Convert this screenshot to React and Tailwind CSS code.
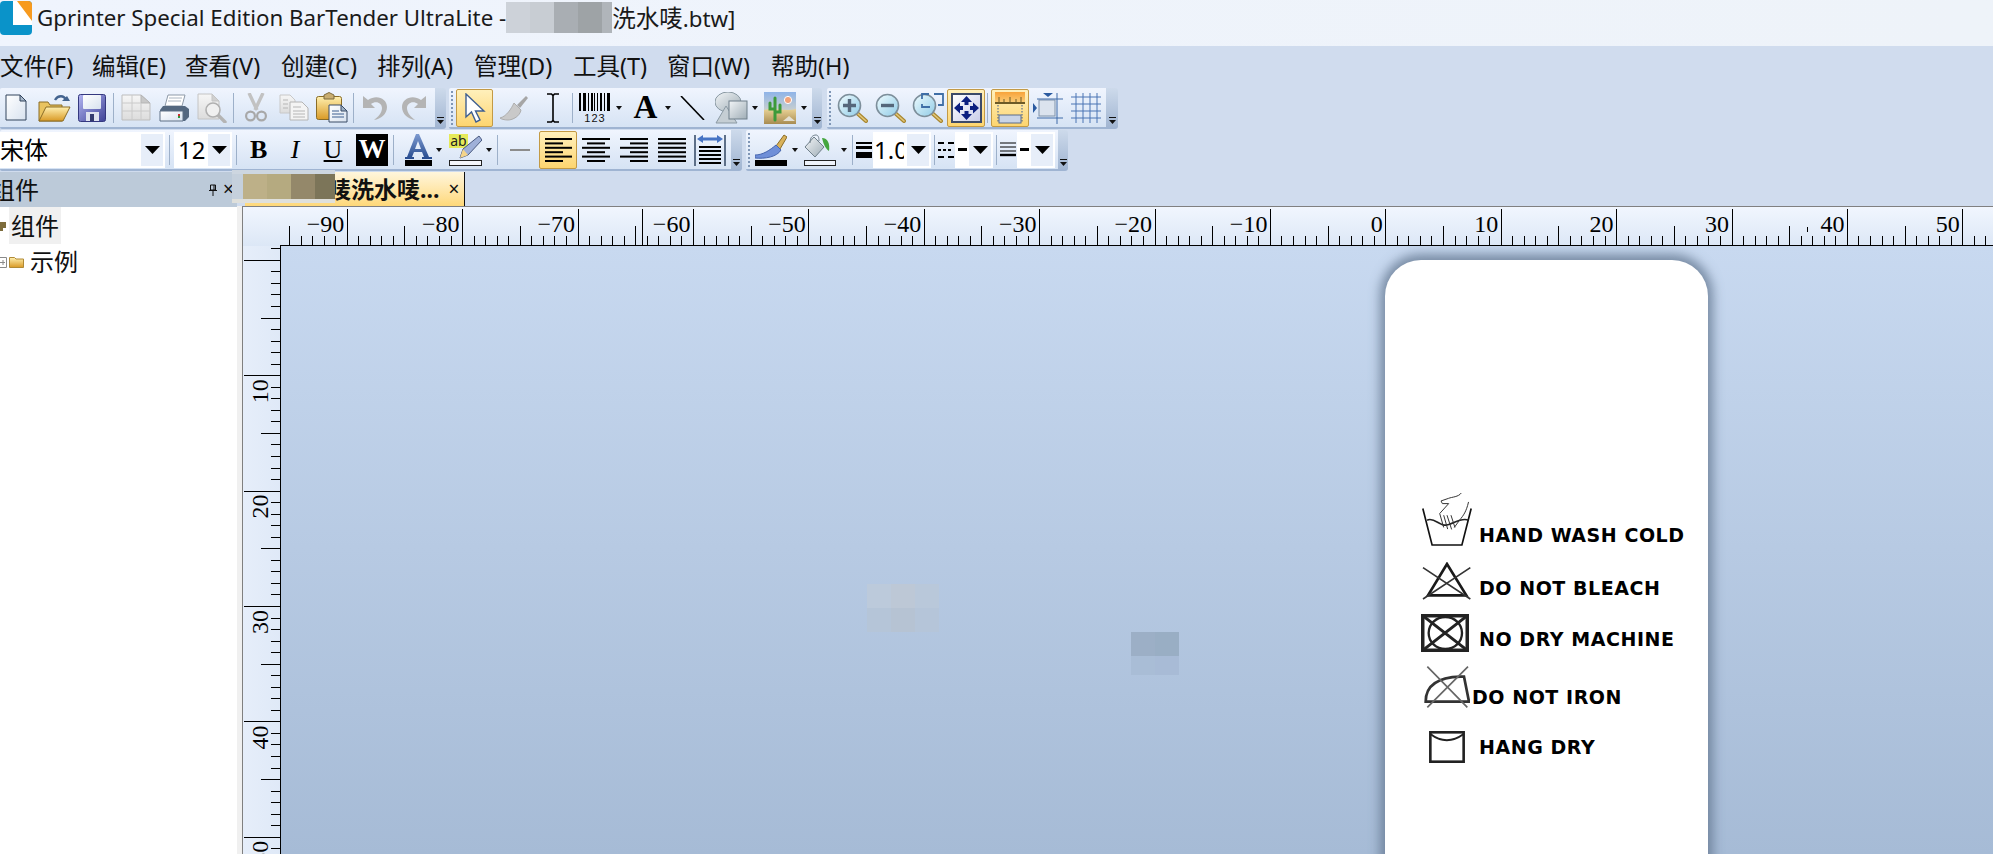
const menus = [
  { label: '文件(F)', width: 'w-[92px]' },
  { label: '编辑(E)', width: 'w-[93px]' },
  { label: '查看(V)', width: 'w-[96px]' },
  { label: '创建(C)', width: 'w-[96px]' },
  { label: '排列(A)', width: 'w-[97px]' },
  { label: '管理(D)', width: 'w-[99px]' },
  { label: '工具(T)', width: 'w-[94px]' },
  { label: '窗口(W)', width: 'w-[104px]' },
  { label: '帮助(H)', width: 'w-[90px]' },
]

const UNIT = 11.54
const X_ZERO = 1385.3
const Y_ZERO = 259.8

function range(from, to) {
  const out = []
  for (let i = from; i <= to; i++) out.push(i)
  return out
}

function Defs() {
  return (
    <svg className="absolute h-0 w-0">
      <defs>
        <linearGradient id="folder" x1="0" y1="0" x2="0" y2="1"><stop offset="0" stopColor="#fff0b0" /><stop offset="1" stopColor="#d99a26" /></linearGradient>
        <linearGradient id="paper" x1="0" y1="0" x2="1" y2="1"><stop offset="0" stopColor="#ffffff" /><stop offset="1" stopColor="#d8e2ef" /></linearGradient>
        <linearGradient id="grey" x1="0" y1="0" x2="0" y2="1"><stop offset="0" stopColor="#f6f6f6" /><stop offset="1" stopColor="#dcdcdc" /></linearGradient>
        <linearGradient id="disk" x1="0" y1="0" x2="1" y2="1"><stop offset="0" stopColor="#b4b6f2" /><stop offset="1" stopColor="#3d4196" /></linearGradient>
        <linearGradient id="lens" x1="0" y1="0" x2="1" y2="1"><stop offset="0" stopColor="#f0fcff" /><stop offset="1" stopColor="#8fcbe6" /></linearGradient>
        <linearGradient id="inkA" x1="0" y1="0" x2="0" y2="1"><stop offset="0" stopColor="#7d9ad0" /><stop offset="1" stopColor="#254a8e" /></linearGradient>
        <linearGradient id="sand" x1="0" y1="0" x2="0" y2="1"><stop offset="0" stopColor="#e9d295" /><stop offset="1" stopColor="#a88c52" /></linearGradient>
        <linearGradient id="sky" x1="0" y1="0" x2="0" y2="1"><stop offset="0" stopColor="#8fb4e8" /><stop offset="1" stopColor="#f3e4bc" /></linearGradient>
        <linearGradient id="rule" x1="0" y1="0" x2="0" y2="1"><stop offset="0" stopColor="#f7a33a" /><stop offset="1" stopColor="#fcd27e" /></linearGradient>
        <linearGradient id="shape" x1="0" y1="0" x2="1" y2="1"><stop offset="0" stopColor="#f2f5f7" /><stop offset="1" stopColor="#9fadb6" /></linearGradient>
        <linearGradient id="fit" x1="0" y1="0" x2="1" y2="1"><stop offset="0" stopColor="#ffffff" /><stop offset="1" stopColor="#c9cdea" /></linearGradient>
      </defs>
    </svg>
  )
}

function Toolbar({ body, chevron, children }) {
  return (
    <div className="flex h-[41px] shrink-0">
      <div className={`flex items-center rounded-l-[2px] border-b-2 border-[#9fb4d2] bg-linear-to-b from-[#f0f5fe] to-[#d6e3f4] ${body}`}>
        {children}
      </div>
      <div className={`flex flex-col items-center justify-end rounded-r-[3px] border-b-2 border-[#9fb4d2] bg-linear-to-b from-[#cddaeb] to-[#a2b6d2] pb-[3px] ${chevron}`}>
        <svg className="h-[7px] w-[7px]" viewBox="0 0 7 7">
          <path d="M0 0.5H7" stroke="#111" />
          <path d="M0 3H7L3.5 7Z" fill="#111" />
        </svg>
      </div>
    </div>
  )
}

function Sep({ className }) {
  return <div className={`h-[30px] w-px shrink-0 bg-[#9db0c9] ${className}`} />
}

function Grip({ className }) {
  return <div className={`h-[34px] w-[2px] shrink-0 border-l-2 border-dotted border-[#7f96b6] ${className}`} />
}

function Tiny({ className }) {
  return (
    <svg className={`h-[4px] w-[6px] shrink-0 ${className}`} viewBox="0 0 6 4">
      <path d="M0 0H6L3 4Z" fill="#111" />
    </svg>
  )
}

function Hot({ className, children }) {
  return (
    <div className={`flex h-[38px] shrink-0 items-center justify-center rounded-[2px] border border-[#c39a45] bg-linear-to-b from-[#fff0bb] to-[#fdd56f] ${className}`}>
      {children}
    </div>
  )
}

function Combo({ width, arrow, children }) {
  return (
    <div className={`flex h-[36px] shrink-0 border-2 border-l-0 border-white bg-white ${width}`}>
      <div className="flex flex-1 items-center overflow-hidden text-[24px] leading-none text-black">{children}</div>
      <div className={`flex items-center justify-center bg-[#e7eef9] ${arrow}`}>
        <svg className="h-[8px] w-[15px]" viewBox="0 0 15 8">
          <path d="M0 0H15L7.5 8Z" fill="#000" />
        </svg>
      </div>
    </div>
  )
}

function AlignIcon({ className, lines }) {
  return (
    <svg className={`h-[24px] w-[28px] shrink-0 ${className}`} viewBox="0 0 28 24">
      {lines.map((l, i) => (
        <rect key={i} x={l[0]} y={i * 4.4} width={l[1]} height="2" fill="#000" />
      ))}
    </svg>
  )
}

function Magnifier({ children }) {
  return (
    <>
      <path d="M20 20L29 28" stroke="#a8862f" strokeWidth="4" strokeLinecap="round" />
      <path d="M20 20L29 28" stroke="#e2c77a" strokeWidth="1.6" strokeLinecap="round" />
      <circle cx="12.5" cy="12.5" r="11" fill="url(#lens)" stroke="#7d8f9b" strokeWidth="1.6" />
      {children}
    </>
  )
}

function TopToolbars() {
  return (
    <div className="flex gap-[3px]">
      <Toolbar body="w-[435px]" chevron="w-[11px]">
        <svg className="ml-[5px] h-[27px] w-[22px] shrink-0" viewBox="0 0 22 27">
          <path d="M1 1H15L21 7V26H1Z" fill="url(#paper)" stroke="#33445c" />
          <path d="M15 1V7H21Z" fill="#a9b9cc" stroke="#33445c" />
        </svg>
        <svg className="ml-[11px] h-[28px] w-[33px] shrink-0" viewBox="0 0 33 28">
          <path d="M1 27V8H10L12 11H24V27Z" fill="#e9c35f" stroke="#8a6c26" />
          <path d="M1 27L8 13H32L25 27Z" fill="url(#folder)" stroke="#8a6c26" />
          <path d="M17 6C20 1 26 1 28 6" fill="none" stroke="#44648f" strokeWidth="2.4" />
          <path d="M24 7H32L29 2Z" fill="#44648f" />
        </svg>
        <svg className="ml-[7px] h-[28px] w-[28px] shrink-0" viewBox="0 0 28 28">
          <rect x="0.5" y="0.5" width="27" height="27" rx="2" fill="url(#disk)" stroke="#34387f" />
          <rect x="5" y="1" width="18" height="14" rx="1" fill="url(#paper)" />
          <rect x="8" y="18" width="13" height="9" fill="#dfe2ef" />
          <rect x="12" y="20" width="4" height="7" fill="#343a6e" />
        </svg>
        <Sep className="ml-[7px]" />
        <svg className="ml-[7px] h-[27px] w-[30px] shrink-0" viewBox="0 0 30 27">
          <path d="M1 1H20L29 9V26H1Z" fill="url(#grey)" stroke="#bdbdbd" />
          <path d="M20 1V9H29Z" fill="#c8c8c8" stroke="#b5b5b5" />
          <path d="M1 9H20M1 17H29M11 1V26M20 9V26" stroke="#cacaca" fill="none" />
        </svg>
        <svg className="ml-[8px] h-[28px] w-[30px] shrink-0" viewBox="0 0 30 28">
          <path d="M9 1H26L23 12H6Z" fill="#fff" stroke="#8d99a7" />
          <path d="M10 4H23M9 7H22" stroke="#aab4c0" />
          <path d="M4 12H26L30 15V23L26 27H1V16Z" fill="#53677f" />
          <path d="M1 17H24V27H1Z" fill="url(#paper)" stroke="#5f7186" />
          <rect x="19" y="20" width="2" height="2" fill="#cc3030" />
          <rect x="19" y="22" width="2" height="2" fill="#2f9a3c" />
        </svg>
        <svg className="ml-[8px] h-[30px] w-[30px] shrink-0" viewBox="0 0 30 30">
          <path d="M1 1H15L22 8V26H1Z" fill="url(#grey)" stroke="#c4c4c4" />
          <path d="M15 1V8H22Z" fill="#d0d0d0" stroke="#c4c4c4" />
          <path d="M21 22L28 29" stroke="#b4b4b4" strokeWidth="3.4" strokeLinecap="round" />
          <circle cx="16" cy="17" r="7" fill="#f0f0f0" stroke="#b0b0b0" strokeWidth="1.6" />
        </svg>
        <Sep className="ml-[6px]" />
        <svg className="ml-[11px] h-[29px] w-[22px] shrink-0" viewBox="0 0 22 29">
          <path d="M4 0L12 17M18 0L10 17" stroke="#c2c2c2" strokeWidth="3.4" />
          <circle cx="5.5" cy="23" r="4.4" fill="none" stroke="#a8a8a8" strokeWidth="2.2" />
          <circle cx="16.5" cy="23" r="4.4" fill="none" stroke="#a8a8a8" strokeWidth="2.2" />
        </svg>
        <svg className="ml-[12px] h-[27px] w-[30px] shrink-0" viewBox="0 0 30 27">
          <path d="M1 1H11L16 6V19H1Z" fill="url(#grey)" stroke="#c8c8c8" />
          <path d="M11 8H23L29 14V26H11Z" fill="#f4f4f4" stroke="#b4b4b4" />
          <path d="M4 6H9M4 10H9M4 14H9M14 13H22M14 17H26M14 20H26M14 23H26" stroke="#b6b6b6" />
        </svg>
        <svg className="ml-[7px] h-[31px] w-[32px] shrink-0" viewBox="0 0 32 31">
          <rect x="0.5" y="4.5" width="25" height="23" rx="2" fill="url(#folder)" stroke="#8a6c26" />
          <path d="M8 7V3L13 0.5L18 3V7Z" fill="#c9ad70" stroke="#7d6a3c" />
          <path d="M13 13H25L31 19V30H13Z" fill="url(#paper)" stroke="#3b4d66" />
          <path d="M25 13V19H31Z" fill="#9cb0c7" stroke="#3b4d66" />
          <path d="M16 19H23M16 22H28M16 25H28" stroke="#3d5f8f" />
        </svg>
        <Sep className="ml-[5px]" />
        <svg className="ml-[9px] h-[27px] w-[24px] shrink-0" viewBox="0 0 24 27">
          <path d="M0 2V14H12L8 10C13 6 19 9 19 14C19 19 15 23 11 26C18 25 24 20 24 13C24 4 13 0 5 6Z" fill="#b4b4b4" />
        </svg>
        <svg className="ml-[15px] h-[27px] w-[24px] -scale-x-100 shrink-0" viewBox="0 0 24 27">
          <path d="M0 2V14H12L8 10C13 6 19 9 19 14C19 19 15 23 11 26C18 25 24 20 24 13C24 4 13 0 5 6Z" fill="#b4b4b4" />
        </svg>
      </Toolbar>
      <Toolbar body="w-[363px]" chevron="w-[10px]">
        <Grip className="ml-[2px]" />
        <Hot className="ml-[3px] w-[37px]">
          <svg className="h-[30px] w-[22px]" viewBox="0 0 22 30">
            <path d="M2 1V24L7.5 19L12 29L16 27L11.5 18H20Z" fill="#fff" stroke="#3f5f90" strokeWidth="1.4" />
          </svg>
        </Hot>
        <svg className="ml-[7px] h-[26px] w-[28px] shrink-0" viewBox="0 0 28 26">
          <path d="M17 10L26 1L28 3L20 13Z" fill="#a6a6a6" />
          <path d="M14 8L21 15C20 21 13 25 8 25C4 25 1 24 0 23C7 21 11 14 14 8Z" fill="#c9c9c9" stroke="#adadad" />
        </svg>
        <svg className="ml-[18px] h-[30px] w-[14px] shrink-0" viewBox="0 0 14 30">
          <path d="M1 1H5.5L7 2.5L8.5 1H13M1 29H5.5L7 27.5L8.5 29H13M7 2.5V27.5" fill="none" stroke="#000" strokeWidth="1.6" />
        </svg>
        <Sep className="ml-[12px]" />
        <svg className="ml-[6px] h-[30px] w-[32px] shrink-0" viewBox="0 0 32 30">
          {[[0, 2], [4, 3], [9, 1], [12, 2], [15, 1], [18, 1], [21, 2], [25, 1], [28, 3]].map(b => (
            <rect key={b[0]} x={b[0]} y="0" width={b[1]} height="18" fill="#000" />
          ))}
          <text x="16" y="29" textAnchor="middle" letterSpacing="1" fontSize="11" fontFamily="Liberation Sans, sans-serif" fill="#111">123</text>
        </svg>
        <Tiny className="ml-[5px]" />
        <span className="ml-[11px] w-[25px] shrink-0 text-center font-['Liberation_Serif',serif] text-[33px] leading-none font-bold text-black">A</span>
        <Tiny className="ml-[7px]" />
        <svg className="ml-[9px] h-[24px] w-[25px] shrink-0" viewBox="0 0 25 24">
          <path d="M1 0L24 24" stroke="#000" strokeWidth="1.6" />
        </svg>
        <svg className="ml-[10px] h-[32px] w-[33px] shrink-0" viewBox="0 0 33 32">
          <ellipse cx="13" cy="10" rx="13" ry="10" fill="url(#shape)" stroke="#8b9aa4" />
          <path d="M11 14L22 31H1Z" fill="#c5ced4" stroke="#8b9aa4" />
          <rect x="14" y="9" width="18" height="18" fill="url(#shape)" stroke="#6f7f8a" />
        </svg>
        <Tiny className="ml-[4px]" />
        <svg className="ml-[6px] h-[32px] w-[32px] shrink-0" viewBox="0 0 32 32">
          <rect width="32" height="32" fill="url(#sky)" />
          <path d="M0 18C10 15 22 20 32 17V32H0Z" fill="url(#sand)" />
          <circle cx="24" cy="8" r="3.6" fill="#f2a27a" stroke="#fff" />
          <path d="M11 28V6M11 17H6V11M11 20H16V13" fill="none" stroke="#3c9a3a" strokeWidth="3" strokeLinecap="round" />
          <path d="M19 29L25 24L31 29Z" fill="#e4e0d2" />
        </svg>
        <Tiny className="ml-[5px]" />
      </Toolbar>
      <div className="ml-[2px]">
        <Toolbar body="w-[279px]" chevron="w-[12px]">
          <Grip className="ml-[2px]" />
          <svg className="ml-[6px] h-[30px] w-[31px] shrink-0" viewBox="0 0 31 30">
            <Magnifier>
              <path d="M12.5 6V19M6 12.5H19" stroke="#55677a" strokeWidth="3.4" />
            </Magnifier>
          </svg>
          <svg className="ml-[7px] h-[30px] w-[31px] shrink-0" viewBox="0 0 31 30">
            <Magnifier>
              <path d="M6 12.5H19" stroke="#55677a" strokeWidth="3.4" />
            </Magnifier>
          </svg>
          <svg className="ml-[6px] h-[30px] w-[32px] shrink-0" viewBox="0 0 32 30">
            <Magnifier>
              <path d="M10 6V1H17M22 1H31V12H26M10 11V14H18" fill="none" stroke="#3f6ea6" strokeWidth="1.8" />
            </Magnifier>
          </svg>
          <Hot className="ml-[3px] w-[38px]">
            <svg className="h-[30px] w-[31px]" viewBox="0 0 31 30">
              <rect x="1" y="1" width="29" height="28" fill="url(#fit)" stroke="#3c4a68" strokeWidth="2" />
              <path d="M15.5 3L21 9H17.5V12H13.5V9H10ZM15.5 27L21 21H17.5V18H13.5V21H10ZM3 15L9 9.5V13H12V17H9V20.5ZM28 15L22 9.5V13H19V17H22V20.5Z" fill="#0c1f80" />
            </svg>
          </Hot>
          <Sep className="ml-[2px]" />
          <Hot className="ml-[3px] w-[38px]">
            <svg className="h-[32px] w-[32px]" viewBox="0 0 32 32">
              <rect x="1" y="0" width="30" height="12" fill="url(#rule)" />
              <rect x="1" y="10" width="30" height="2" fill="#6d5a26" />
              <path d="M5 5V10M10 7V10M16 5V10M22 7V10M27 5V10" stroke="#6d5a26" />
              <path d="M4 13V31M28 13V31" stroke="#3d5a8f" strokeDasharray="1.5 1.5" />
              <rect x="5" y="23" width="22" height="8" fill="#c9d4e6" stroke="#5a6d8a" />
            </svg>
          </Hot>
          <svg className="ml-[4px] h-[32px] w-[30px] shrink-0" viewBox="0 0 30 32">
            <rect x="6" y="8" width="16" height="16" fill="#dbe3ee" stroke="#7f92aa" />
            <path d="M4 7H30M4 26H30M24 1V32" stroke="#3f6aa8" fill="none" />
            <path d="M10 1H20L15 5ZM0 11V21L4 16Z" fill="#2a5aa0" />
          </svg>
          <svg className="ml-[8px] h-[30px] w-[30px] shrink-0" viewBox="0 0 30 30">
            <path d="M0 4H30M0 11H30M0 18H30M0 25H30M5 0V30M12 0V30M19 0V30M26 0V30" stroke="#4a74b4" fill="none" />
          </svg>
        </Toolbar>
      </div>
    </div>
  )
}

function FormatToolbars() {
  return (
    <div className="mt-[1px] flex">
      <Toolbar body="w-[731px]" chevron="w-[11px]">
        <Combo width="w-[165px]" arrow="w-[22px]">宋体</Combo>
        <Sep className="ml-[4px]" />
        <Combo width="ml-[4px] w-[58px]" arrow="w-[22px]"><span className="ml-[4px]">12</span></Combo>
        <Sep className="ml-[4px]" />
        <span className="ml-[13px] w-[16px] shrink-0 text-center font-['Liberation_Serif',serif] text-[26px] leading-none font-bold text-black">B</span>
        <span className="ml-[22px] w-[14px] shrink-0 text-center font-['Liberation_Serif',serif] text-[26px] leading-none italic text-black">I</span>
        <span className="ml-[21px] w-[20px] shrink-0 text-center font-['Liberation_Serif',serif] text-[26px] leading-none text-black underline">U</span>
        <span className="ml-[13px] flex h-[32px] w-[32px] shrink-0 items-center justify-center bg-black font-['Liberation_Serif',serif] text-[27px] leading-none font-bold text-white">W</span>
        <Sep className="ml-[5px]" />
        <svg className="ml-[11px] h-[32px] w-[27px] shrink-0" viewBox="0 0 27 32">
          <path d="M14 0L24 23H27V25H17V23H19L17 18H9L7 23H9V25H0V23H2L11 0ZM10 15H16L13 7Z" fill="url(#inkA)" />
          <rect x="0" y="26" width="27" height="6" fill="#000" />
        </svg>
        <Tiny className="ml-[4px]" />
        <svg className="ml-[7px] h-[32px] w-[33px] shrink-0" viewBox="0 0 33 32">
          <rect x="0" y="0" width="19" height="14" fill="#e6ea5a" />
          <text x="9.5" y="12" textAnchor="middle" fontSize="14" fontFamily="Noto Sans, sans-serif" fill="#222">ab</text>
          <path d="M30 2L33 6L19 21L11 24L14 15Z" fill="#9fb0d8" stroke="#4a5a80" />
          <path d="M14 15L19 21L11 24Z" fill="#f4d48a" />
          <rect x="0.5" y="26.5" width="32" height="5" fill="#f4f6fb" stroke="#222" />
        </svg>
        <Tiny className="ml-[4px]" />
        <Sep className="ml-[5px]" />
        <div className="ml-[12px] h-[2px] w-[20px] shrink-0 bg-[#8c8c8c]" />
        <Hot className="ml-[9px] w-[38px]">
          <AlignIcon className="" lines={[[1, 28], [1, 18], [1, 28], [1, 18], [1, 28], [1, 18]]} />
        </Hot>
        <AlignIcon className="ml-[5px]" lines={[[0, 28], [5, 18], [0, 28], [5, 18], [0, 28], [5, 18]]} />
        <AlignIcon className="ml-[10px]" lines={[[0, 28], [10, 18], [0, 28], [10, 18], [0, 28], [10, 18]]} />
        <AlignIcon className="ml-[10px]" lines={[[0, 28], [0, 28], [0, 28], [0, 28], [0, 28], [0, 28]]} />
        <svg className="ml-[8px] h-[32px] w-[32px] shrink-0" viewBox="0 0 32 32">
          <path d="M1 1V32M31 1V32" stroke="#5d6f88" strokeWidth="2" />
          <path d="M3 5L9 1V3.5H23V1L29 5L23 9V6.5H9V9Z" fill="#4674c4" />
          <path d="M5 13H27M5 17H27M5 21H27M5 25H27M5 29H27" stroke="#000" strokeWidth="2" />
        </svg>
      </Toolbar>
      <div className="ml-[4px]">
        <Toolbar body="w-[312px]" chevron="w-[10px]">
          <Grip className="ml-[2px]" />
          <svg className="ml-[5px] h-[32px] w-[32px] shrink-0" viewBox="0 0 32 32">
            <path d="M21 12L29 1L32 3L25 15Z" fill="#d9b25a" stroke="#8a6c26" />
            <path d="M21 11L26 16C22 23 10 25 0 24V21C8 21 15 16 21 11Z" fill="#6f8fd8" stroke="#4766ae" />
            <rect x="0" y="26" width="32" height="6" fill="#000" />
          </svg>
          <Tiny className="ml-[5px]" />
          <svg className="ml-[6px] h-[32px] w-[32px] shrink-0" viewBox="0 0 32 32">
            <path d="M10 3L20 13L11 23L1 13Z" fill="url(#shape)" stroke="#6f7f8a" />
            <path d="M6 9C6 3 9 1 12 1C14 1 15 3 15 7" fill="none" stroke="#6f7f8a" />
            <path d="M18 4C24 4 26 10 25 17C22 15 20 12 18 4Z" fill="#45a63f" />
            <rect x="0.5" y="26.5" width="31" height="5" fill="#eef3fb" stroke="#222" />
          </svg>
          <Tiny className="ml-[5px]" />
          <Sep className="ml-[5px]" />
          <svg className="ml-[3px] h-[16px] w-[16px] shrink-0" viewBox="0 0 16 16">
            <rect y="0" width="16" height="2" fill="#000" />
            <rect y="4" width="16" height="3" fill="#000" />
            <rect y="10" width="16" height="6" fill="#000" />
          </svg>
          <Combo width="ml-[1px] w-[58px]" arrow="w-[22px]"><span className="ml-[1px] w-[30px] shrink-0 overflow-hidden whitespace-nowrap">1.0</span></Combo>
          <Sep className="ml-[3px]" />
          <svg className="ml-[3px] h-[16px] w-[16px] shrink-0" viewBox="0 0 16 16">
            <path d="M0 1H6M10 1H16" stroke="#000" strokeWidth="2" />
            <path d="M0 8H3M5 8H8M10 8H13" stroke="#000" strokeWidth="2" />
            <path d="M0 15H6M10 15H16" stroke="#000" strokeWidth="2" />
          </svg>
          <Combo width="ml-[1px] w-[38px]" arrow="w-[22px]"><span className="ml-[3px] h-[3px] w-[9px] bg-black" /></Combo>
          <Sep className="ml-[3px]" />
          <svg className="ml-[3px] h-[16px] w-[16px] shrink-0" viewBox="0 0 16 16">
            <path d="M0 1H16M0 5H16M0 9H16" stroke="#000" />
            <path d="M0 13H16" stroke="#000" strokeWidth="2.4" />
          </svg>
          <Combo width="ml-[1px] w-[38px]" arrow="w-[22px]"><span className="ml-[3px] h-[3px] w-[9px] bg-black" /></Combo>
        </Toolbar>
      </div>
    </div>
  )
}

function TopRuler() {
  return (
    <svg className="block h-[39px] w-[1750px] bg-linear-to-b from-[#f1f6fe] to-[#dce7f6]" viewBox="243 207 1750 39" shapeRendering="crispEdges">
      <path d="M280 245.5H1993" stroke="#000" />
      {range(-95, 56).map(u => {
        const x = Math.round(X_ZERO + u * UNIT) + 0.5
        const top = u % 10 === 0 ? 209 : u % 5 === 0 ? 226 : 236
        return <path key={u} d={`M${x} ${top}V245`} stroke="#000" />
      })}
      <path d="M642.5 209V245M1807.5 227V232" stroke="#000" />
      {range(-9, 5).map(t => (
        <text key={t} x={X_ZERO + t * 10 * UNIT - 2.5} y="232" textAnchor="end" fontSize="24" fontFamily="Liberation Serif, serif" fill="#000" shapeRendering="auto">
          {t < 0 ? `−${-t * 10}` : t * 10}
        </text>
      ))}
    </svg>
  )
}

function LeftRuler() {
  return (
    <svg className="block h-[608px] w-[38px] bg-linear-to-r from-[#e6eefa] to-[#dfe9f7]" viewBox="243 246 38 608" shapeRendering="crispEdges">
      <path d="M280.5 246V854" stroke="#000" />
      {range(-1, 52).map(v => {
        const y = Math.round(Y_ZERO + v * UNIT) + 0.5
        const left = v % 10 === 0 ? 244 : v % 5 === 0 ? 261 : 271
        return <path key={v} d={`M${left} ${y}H280`} stroke="#000" />
      })}
      {[1, 2, 3, 4, 5].map(t => {
        const y = Y_ZERO + t * 10 * UNIT + 4
        return (
          <text key={t} transform={`translate(268 ${y}) rotate(-90)`} textAnchor="end" fontSize="24" fontFamily="Liberation Serif, serif" fill="#000" shapeRendering="auto">
            {t * 10}
          </text>
        )
      })}
    </svg>
  )
}

function CareLabel() {
  const text = "font-['DejaVu_Sans',sans-serif] text-[19px] leading-[20px] font-bold tracking-[0.55px] text-black whitespace-nowrap"
  return (
    <div className="h-[800px] w-[323px] rounded-[36px] bg-white pt-[233px] shadow-[0_-1px_11px_5px_rgba(100,120,145,0.8)]">
      <div className="flex h-[53px] items-end">
        <svg className="ml-[37px] h-[53px] w-[50px] shrink-0" viewBox="125 68 150 160">
          <path d="M127 115L155 225H245L273 115" fill="none" stroke="#111" strokeWidth="5" />
          <path d="M140 150C160 140 175 165 195 165C215 165 240 140 265 150" fill="none" stroke="#222" strokeWidth="5" />
          <path d="M243 68C235 80 215 80 205 84L182 92L186 100L205 100L178 130L190 172M190 135L202 177M200 135L214 178M212 135L224 172M265 95C258 125 250 135 238 150L222 172" fill="none" stroke="#333" strokeWidth="3" />
        </svg>
        <span className={`mb-[1px] ml-[7px] ${text}`}>HAND WASH COLD</span>
      </div>
      <div className="mt-[16px] flex h-[38px] items-end">
        <svg className="ml-[37px] h-[38px] w-[49px] shrink-0" viewBox="125 275 147 114">
          <path d="M200 281L143 375H258Z" fill="none" stroke="#1a1a1a" strokeWidth="8" />
          <path d="M128 386L270 292M128 292L270 386" stroke="#333" strokeWidth="5" />
        </svg>
        <span className={`mb-[2px] ml-[8px] ${text}`}>DO NOT BLEACH</span>
      </div>
      <div className="mt-[14px] flex h-[38px] items-end">
        <svg className="ml-[36px] h-[38px] w-[48px] shrink-0" viewBox="123 432 144 114">
          <rect x="128" y="437" width="134" height="104" fill="none" stroke="#222" strokeWidth="11" />
          <ellipse cx="196" cy="489" rx="50" ry="48" fill="none" stroke="#222" strokeWidth="7" />
          <path d="M128 437L262 541M262 437L128 541" stroke="#222" strokeWidth="9" />
        </svg>
        <span className={`mb-[3px] ml-[10px] ${text}`}>NO DRY MACHINE</span>
      </div>
      <div className="mt-[13px] flex h-[43px] items-end">
        <svg className="ml-[39px] h-[43px] w-[46px] shrink-0" viewBox="130 585 138 129">
          <path d="M135 695C135 650 165 622 240 620L250 620L265 695Z" fill="none" stroke="#333" strokeWidth="8" />
          <path d="M140 590L260 712M262 590L140 712" stroke="#666" strokeWidth="5" />
        </svg>
        <span className={`mb-[1px] ml-[2px] ${text}`}>DO NOT IRON</span>
      </div>
      <div className="mt-[23px] flex h-[32px] items-end">
        <svg className="ml-[44px] h-[32px] w-[36px] shrink-0" viewBox="146 781 110 98">
          <rect x="150" y="785" width="102" height="90" fill="none" stroke="#222" strokeWidth="8" />
          <path d="M150 790Q200 828 252 790" fill="none" stroke="#222" strokeWidth="6" />
        </svg>
        <span className={`mb-[6px] ml-[14px] ${text}`}>HANG DRY</span>
      </div>
    </div>
  )
}

export default function App() {
  return (
    <div className="relative flex h-[854px] w-[1993px] flex-col overflow-hidden bg-[#d0dcee] font-['Noto_Sans','Noto_Sans_CJK_SC',sans-serif] text-black">
      <Defs />

      <div className="flex h-[46px] shrink-0 items-start bg-linear-to-r from-[#eff4fd] to-[#eef3f9]">
        <svg className="mt-[1px] h-[34px] w-[32px] shrink-0" viewBox="0 0 32 34">
          <rect width="32" height="34" rx="4" fill="#0a93c9" />
          <path d="M13 0H18L32 19V24H13Z" fill="#fff" />
          <path d="M17 0H28Q32 0 32 4V20Z" fill="#f79a1e" />
        </svg>
        <span className="mt-[3px] ml-[5px] text-[22.3px] leading-[30px] whitespace-nowrap text-[#1a1a1a]">Gprinter Special Edition BarTender UltraLite -</span>
        <div className="mt-[2px] flex h-[31px] w-[106px] shrink-0">
          <div className="w-[24px] bg-[#cdd2d9]" />
          <div className="w-[24px] bg-[#c8cdd3]" />
          <div className="w-[24px] bg-[#a9aeb3]" />
          <div className="w-[24px] bg-[#9ea3a6]" />
          <div className="w-[10px] bg-[#b0b5ba]" />
        </div>
        <span className="mt-[3px] text-[23.5px] leading-[30px] whitespace-nowrap text-[#1a1a1a]">洗水唛<span className="text-[22.3px]">.btw]</span></span>
      </div>

      <div className="flex h-[42px] shrink-0 items-center">
        {menus.map(m => (
          <span key={m.label} className={`text-[23.5px] leading-none whitespace-nowrap text-[#111] ${m.width}`}>{m.label}</span>
        ))}
      </div>

      <TopToolbars />
      <FormatToolbars />

      <div className="mt-[1px] flex min-h-0 flex-1">
        <aside className="w-[237px] shrink-0 bg-white">
          <div className="flex h-[35px] items-center bg-[#bccad9]">
            <span className="ml-[-9px] shrink-0 text-[24px] leading-none whitespace-nowrap text-[#111]">组件</span>
            <svg className="ml-[169px] h-[12px] w-[10px] shrink-0" viewBox="0 0 10 12">
              <path d="M2.5 1H7.5V6H2.5ZM1 6.5H9M5 6.5V12M6 1V6" fill="none" stroke="#111" />
            </svg>
            <span className="ml-[5px] shrink-0 text-[19px] leading-none text-[#111]">×</span>
          </div>
          <div className="flex h-[37px] items-center">
            <svg className="h-[12px] w-[7px] shrink-0" viewBox="0 0 7 12">
              <path d="M0 2H6V8H3V11H0Z" fill="#7d6c3c" />
            </svg>
            <span className="ml-[2px] flex h-[37px] w-[52px] items-center justify-center bg-[#f0f0f0] text-[24px] leading-none whitespace-nowrap text-[#111]">组件</span>
          </div>
          <div className="flex h-[36px] items-center">
            <svg className="h-[11px] w-[7px] shrink-0" viewBox="0 0 7 11">
              <path d="M0 0.5H6.5V10.5H0M0 5.5H5M3 3V8" fill="none" stroke="#8a8a8a" />
            </svg>
            <svg className="ml-[2px] h-[12px] w-[15px] shrink-0" viewBox="0 0 15 12">
              <path d="M0.5 1.5H5.5L7 3H14.5V11.5H0.5Z" fill="url(#folder)" stroke="#b08a36" />
            </svg>
            <span className="ml-[6px] text-[24px] leading-none whitespace-nowrap text-[#111]">示例</span>
          </div>
        </aside>

        <div className="relative flex min-w-0 flex-1 flex-col">
          <div className="flex h-[34px] shrink-0 pl-[8px]">
            <div className="flex w-[220px] items-center border-r border-[#111] bg-linear-to-b from-[#fff6dc] to-[#fed878] pl-[83px]">
              <span className="text-[23px] leading-none font-bold whitespace-nowrap text-[#111]">唛洗水唛...</span>
              <span className="ml-[9px] text-[19px] leading-none text-[#111]">×</span>
            </div>
          </div>
          <div className="absolute top-[-2px] left-[-5px] flex h-[33px] w-[103px] flex-col">
            <div className="h-[4px] bg-[#cdd6e0]" />
            <div className="flex h-[25px]">
              <div className="w-[11px] bg-[#c5d0dc]" />
              <div className="w-[24px] bg-[#bdb088]" />
              <div className="w-[24px] bg-[#b5aa80]" />
              <div className="w-[24px] bg-[#94886a]" />
              <div className="w-[20px] bg-[#7c7559]" />
            </div>
            <div className="h-[4px] bg-[#dfe0dc]" />
          </div>

          <div className="flex min-h-0 flex-1">
            <div className="w-[5px] shrink-0 bg-[#f0f0f0]" />
            <div className="min-w-0 flex-1 border-t border-l border-[#808080]">
              <TopRuler />
              <div className="flex">
                <LeftRuler />
                <div className="relative h-[608px] min-w-0 flex-1 overflow-hidden bg-linear-to-b from-[#c8d9f0] to-[#a6bbd6] pt-[14px] pl-[1104px]">
                  <CareLabel />
                  <div className="absolute top-[338px] left-[586px] grid w-[72px] grid-cols-3">
                    <div className="h-[24px] bg-[#bccadb]" />
                    <div className="h-[24px] bg-[#bdc8d6]" />
                    <div className="h-[24px] bg-[#b9c8da]" />
                    <div className="h-[24px] bg-[#b5c5d8]" />
                    <div className="h-[24px] bg-[#b6c3d3]" />
                    <div className="h-[24px] bg-[#b5c5d9]" />
                  </div>
                  <div className="absolute top-[386px] left-[850px] grid w-[48px] grid-cols-2">
                    <div className="h-[24px] bg-[#9cafc6]" />
                    <div className="h-[24px] bg-[#99aec4]" />
                    <div className="h-[19px] bg-[#a9bdd6]" />
                    <div className="h-[19px] bg-[#a8bbd6]" />
                  </div>
                </div>
              </div>
            </div>
          </div>
        </div>
      </div>
    </div>
  )
}
